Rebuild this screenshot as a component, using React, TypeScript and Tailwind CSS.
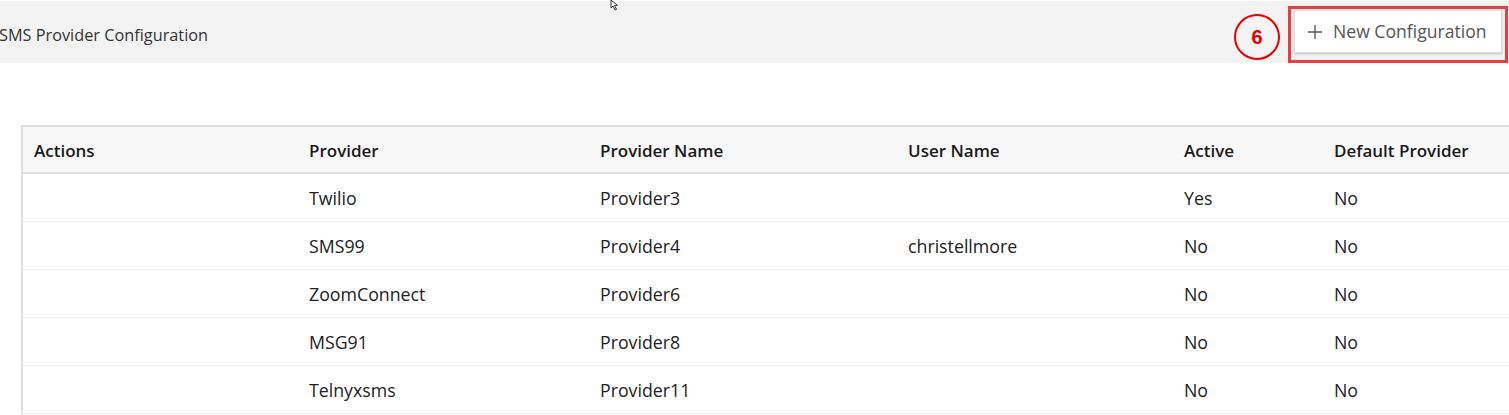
import React from "react";

const rows = [
  { p: "Twilio", n: "Provider3", u: "", a: "Yes", d: "No" },
  { p: "SMS99", n: "Provider4", u: "christellmore", a: "No", d: "No" },
  { p: "ZoomConnect", n: "Provider6", u: "", a: "No", d: "No" },
  { p: "MSG91", n: "Provider8", u: "", a: "No", d: "No" },
  { p: "Telnyxsms", n: "Provider11", u: "", a: "No", d: "No" },
];

const cols = "grid grid-cols-[275px_291px_308px_276px_150px_1fr]";

export default function App() {
  return (
    <div
      className="w-[1509px] h-[415px] overflow-hidden bg-white relative"
      style={{ fontFamily: '"Open Sans", "Liberation Sans", sans-serif' }}
    >
      <div className="h-px bg-white" />
      <div className="h-[62px] bg-[#f3f3f3] flex items-start justify-between">
        <div className="text-[16.3px] text-[#333] -ml-px mt-[23px] leading-[22px]">SMS Provider Configuration</div>
        <div className="flex items-start">
          <div className="w-[46px] h-[46px] rounded-full border-[2.5px] border-[#e60000] flex items-center justify-center mr-[8px] mt-[13px]">
            <span className="text-[#e60000] text-[20px] font-bold" style={{ fontFamily: '"Liberation Sans", Arial, sans-serif' }}>6</span>
          </div>
          <div className="border-[3px] border-[#ee3b3b] pl-[3px] pr-[3px] pt-[1px] pb-[7px] mr-[1px] mt-[5px]">
            <button className="h-[43px] w-[208px] bg-white border border-[#dcdcdc] shadow-[0_1px_2px_rgba(0,0,0,0.2)] flex items-center pl-[12px] text-[#555] text-[17.6px]">
              <svg width="16" height="16" viewBox="0 0 16 16" className="mr-[10px]">
                <path d="M8 1v14M1 8h14" stroke="#555" strokeWidth="1.3" />
              </svg>
              New Configuration
            </button>
          </div>
        </div>
      </div>

      <svg width="12" height="11" viewBox="0 0 12 11" className="absolute left-[610px] top-0">
        <path d="M1 0v8l2-2 2 4 1.5-.7-2-4h3z" fill="#fff" stroke="#333" strokeWidth="1" />
      </svg>

      <div className="mt-[62px] ml-[21px] w-[1540px] border-l-2 border-t-2 border-[#dedede] text-[17.75px] text-[#222]">
        <div className={`${cols} h-[47px] items-center bg-[#f8f8f8] border-b-2 border-[#dedede] font-semibold text-[17px] text-[#1a1a1a]`}>
          <div className="pl-[11px] pt-[3px]">Actions</div>
          <div className="pl-[11px] pt-[3px]">Provider</div>
          <div className="pl-[11px] pt-[3px]">Provider Name</div>
          <div className="pl-[11px] pt-[3px]">User Name</div>
          <div className="pl-[11px] pt-[3px]">Active</div>
          <div className="pl-[11px] pt-[3px]">Default Provider</div>
        </div>
        {rows.map((r) => (
          <div key={r.n} className={`${cols} h-[48px] items-center border-b border-[#ececec]`}>
            <div className="pl-[11px] pt-[2px]"></div>
            <div className="pl-[11px] pt-[2px]">{r.p}</div>
            <div className="pl-[11px] pt-[2px]">{r.n}</div>
            <div className="pl-[11px] pt-[2px]">{r.u}</div>
            <div className="pl-[11px] pt-[2px]">{r.a}</div>
            <div className="pl-[11px] pt-[2px]">{r.d}</div>
          </div>
        ))}
      </div>
    </div>
  );
}
